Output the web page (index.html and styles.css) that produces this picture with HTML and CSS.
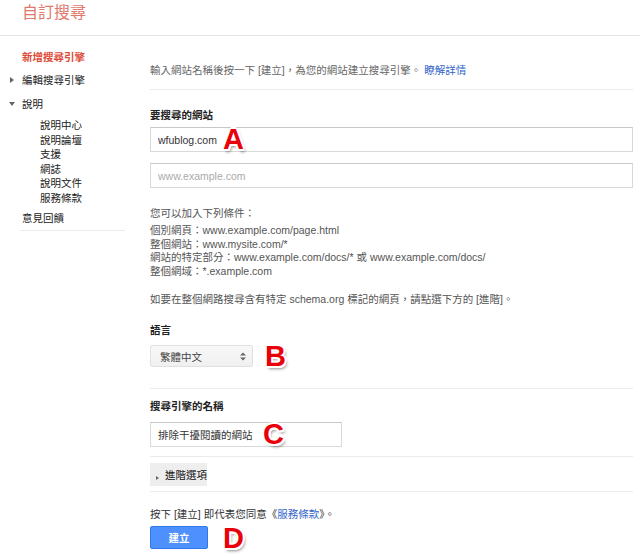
FILE: index.html
```html
<!DOCTYPE html>
<html lang="zh-Hant">
<head>
    <meta charset="UTF-8">
    <meta name="viewport" content="width=device-width, initial-scale=1.0">
    <title>自訂搜尋</title>
    <link rel="stylesheet" href="styles.css">
</head>
<body>
    <div class="topbar">
        <div class="brand">自訂搜尋</div>
    </div>
    <div class="layout">
        <nav class="sidebar">
            <div class="nav-item current">新增搜尋引擎</div>
            <div class="nav-item toggle"><span class="tri tri-right"></span>編輯搜尋引擎</div>
            <div class="nav-item toggle open"><span class="tri tri-down"></span>說明</div>
            <ul class="subnav">
                <li>說明中心</li>
                <li>說明論壇</li>
                <li>支援</li>
                <li>網誌</li>
                <li>說明文件</li>
                <li>服務條款</li>
            </ul>
            <div class="nav-item feedback">意見回饋</div>
        </nav>

        <main class="content">
            <p class="intro">輸入網站名稱後按一下 [建立]，為您的網站建立搜尋引擎。 <a href="#">瞭解詳情</a></p>

            <section class="block sites">
                <div class="label">要搜尋的網站</div>
                <input type="text" class="field" value="wfublog.com">
                <input type="text" class="field second" placeholder="www.example.com">
                <p class="hint-title">您可以加入下列條件：</p>
                <ul class="hints">
                    <li>個別網頁：www.example.com/page.html</li>
                    <li>整個網站：www.mysite.com/*</li>
                    <li>網站的特定部分：www.example.com/docs/* 或 www.example.com/docs/</li>
                    <li>整個網域：*.example.com</li>
                </ul>
                <p class="hint-note">如要在整個網路搜尋含有特定 schema.org 標記的網頁，請點選下方的 [進階]。</p>
                <div class="label lang-label">語言</div>
                <div class="select">
                    <span>繁體中文</span>
                    <svg width="6" height="9" viewBox="0 0 6 9"><path d="M0 3.5L3 0.5 6 3.5Z M0 5.5L3 8.5 6 5.5Z" fill="#666"/></svg>
                </div>
            </section>

            <section class="block name">
                <div class="label">搜尋引擎的名稱</div>
                <input type="text" class="field short" value="排除干擾閱讀的網站">
            </section>

            <section class="block advanced">
                <div class="adv-toggle"><span class="tri tri-small"></span>進階選項</div>
            </section>

            <p class="terms">按下 [建立] 即代表您同意《<a href="#">服務條款</a>》。</p>
            <button class="create-btn">建立</button>
        </main>
    </div>

    <span class="mark mark-a">A</span>
    <span class="mark mark-b">B</span>
    <span class="mark mark-c">C</span>
    <span class="mark mark-d">D</span>
</body>
</html>
```

FILE: styles.css
```css
body {
    margin: 0;
    font-family: "Liberation Sans", Arial, "Noto Sans CJK TC", sans-serif;
    font-size: 10.5px;
    color: #222;
    background: #fff;
}
a {
    color: #36c;
    text-decoration: none;
}
.topbar {
    height: 35px;
    border-bottom: 1px solid #e5e5e5;
}
.brand {
    padding: 4px 0 0 22px;
    font-size: 16px;
    line-height: 18px;
    color: #e0786b;
}
.layout {
    display: flex;
}
.sidebar {
    width: 150px;
    flex-shrink: 0;
    padding-top: 14px;
}
.nav-item {
    line-height: 14px;
    padding-left: 22px;
    position: relative;
}
.nav-item.current {
    color: #dd4b39;
    font-weight: bold;
}
.nav-item.toggle {
    margin-top: 9px;
}
.nav-item.open {
    margin-top: 10px;
}
.tri {
    position: absolute;
    width: 0;
    height: 0;
}
.tri-right {
    left: 10px;
    top: 4px;
    border-top: 3px solid transparent;
    border-bottom: 3px solid transparent;
    border-left: 4px solid #666;
}
.tri-down {
    left: 9px;
    top: 5px;
    border-left: 3px solid transparent;
    border-right: 3px solid transparent;
    border-top: 4px solid #666;
}
.subnav {
    list-style: none;
    margin: 7px 0 0;
    padding: 0 0 0 40px;
}
.subnav li {
    line-height: 14.5px;
}
.nav-item.feedback {
    margin: 6px 25px 0 20px;
    padding: 0 0 5px 2px;
    border-bottom: 1px solid #ebebeb;
}
.content {
    flex: 1;
    padding: 27px 7px 0 0;
}
.intro {
    margin: 0;
    line-height: 14px;
    color: #666;
    padding-bottom: 12px;
    border-bottom: 1px solid #ebebeb;
}
.block {
    border-bottom: 1px solid #ebebeb;
}
.label {
    font-weight: bold;
    line-height: 14px;
    color: #222;
}
.sites {
    padding: 18px 0 21px;
}
.field {
    display: block;
    box-sizing: border-box;
    width: 100%;
    height: 25px;
    margin: 5px 0 0;
    padding: 0 7px;
    border: 1px solid #d9d9d9;
    border-top-color: #c8c8c8;
    font-family: inherit;
    font-size: 10.5px;
    color: #333;
    outline: none;
}
.field::placeholder {
    color: #aaa;
}
.field.second {
    margin-top: 11px;
}
.field.short {
    width: 192px;
    margin-top: 9px;
}
.hint-title {
    margin: 18px 0 0;
    line-height: 14px;
    color: #555;
}
.hints {
    list-style: none;
    margin: 4px 0 0;
    padding: 0;
    color: #555;
}
.hints li {
    line-height: 13.5px;
}
.hint-note {
    margin: 14px 0 0;
    line-height: 14px;
    color: #555;
}
.lang-label {
    margin-top: 17px;
}
.select {
    display: flex;
    align-items: center;
    justify-content: space-between;
    box-sizing: border-box;
    width: 103px;
    height: 22px;
    margin-top: 8px;
    padding: 0 6px 0 9px;
    border: 1px solid #e0e0e0;
    border-radius: 2px;
    background: linear-gradient(#f8f8f8, #f0f0f0);
    color: #444;
}
.name {
    padding: 10px 0 9px;
}
.advanced {
    padding: 6px 0 5px;
}
.adv-toggle {
    position: relative;
    display: inline-block;
    width: 57px;
    height: 23px;
    box-sizing: border-box;
    padding-left: 15px;
    line-height: 24px;
    background: #eee;
    color: #111;
    font-size: 10.5px;
}
.tri-small {
    left: 6px;
    top: 13px;
    border-top: 2.5px solid transparent;
    border-bottom: 2.5px solid transparent;
    border-left: 3px solid #666;
}
.terms {
    margin: 15px 0 0;
    line-height: 14px;
    color: #333;
}
.create-btn {
    display: block;
    width: 58px;
    height: 23px;
    margin-top: 5px;
    padding: 0;
    border: 1px solid #3079ed;
    border-radius: 2px;
    background: #4d90fe;
    color: #fff;
    font-family: inherit;
    font-size: 10.5px;
    font-weight: bold;
}
.mark {
    position: absolute;
    font-family: "Liberation Sans", Arial, sans-serif;
    font-weight: bold;
    font-size: 29px;
    line-height: 29px;
    color: #e8000b;
    text-shadow: -2px 0 #fff, 2px 0 #fff, 0 -2px #fff, 0 2px #fff,
        -1.5px -1.5px #fff, 1.5px -1.5px #fff, -1.5px 1.5px #fff, 1.5px 1.5px #fff,
        2px 3px 3px rgba(0, 0, 0, 0.45);
}
.mark-a { left: 223px; top: 125px; }
.mark-b { left: 265px; top: 342px; }
.mark-c { left: 263px; top: 420px; }
.mark-d { left: 223px; top: 524px; }
```
